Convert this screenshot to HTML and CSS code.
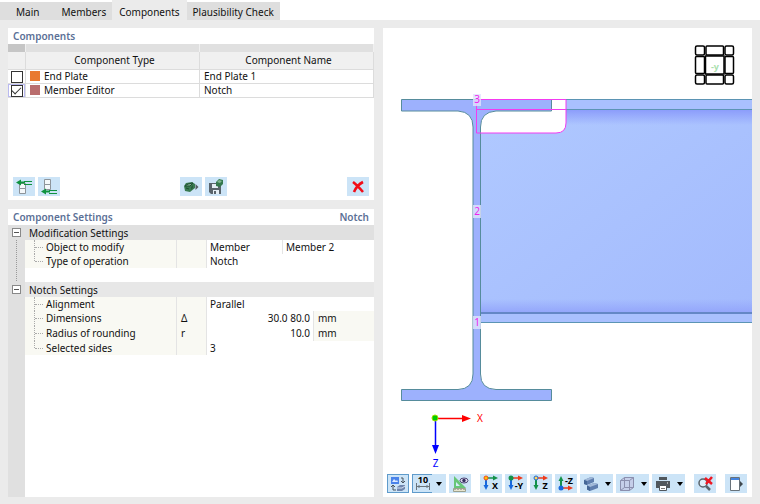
FILE: index.html
```html
<!DOCTYPE html>
<html lang="en">
<head>
<meta charset="utf-8">
<title>Components</title>
<link rel="stylesheet" href="styles.css">
</head>
<body>
<nav class="tabs" aria-label="Sections">
  <button class="tab tab-main" type="button">Main</button>
  <button class="tab" type="button">Members</button>
  <button class="tab tab-active" type="button">Components</button>
  <button class="tab" type="button">Plausibility Check</button>
</nav>

<main class="workspace">
  <div class="side">
    <section class="panel list-panel">
      <h2 class="panel-title">Components</h2>
      <table class="components">
        <colgroup><col class="col-check"><col><col></colgroup>
        <thead>
          <tr class="strip"><td></td><td></td><td></td></tr>
          <tr class="heads"><th></th><th>Component Type</th><th>Component Name</th></tr>
        </thead>
        <tbody>
          <tr>
            <td class="check"><input type="checkbox" aria-label="End Plate 1"></td>
            <td><span class="swatch swatch-orange"></span>End Plate</td>
            <td>End Plate 1</td>
          </tr>
          <tr>
            <td class="check check-focus"><input type="checkbox" checked aria-label="Notch"></td>
            <td><span class="swatch swatch-rose"></span>Member Editor</td>
            <td>Notch</td>
          </tr>
        </tbody>
      </table>
      <div class="actions">
        <button class="tool" type="button" aria-label="Insert above">
          <svg width="18" height="16" viewBox="0 0 18 16"><path d="M4.500 4.500h6v5h-6zM4.500 9.500h6v5h-6z" fill="#f4f8fb" stroke="#8d949a"/><path d="M1 3.500l5-3v2h4v2H6v2z" fill="#10933f"/><path d="M9 2.500h8M9 5.500h8" stroke="#10933f" fill="none"/></svg>
        </button>
        <button class="tool" type="button" aria-label="Insert below">
          <svg width="18" height="16" viewBox="0 0 18 16"><path d="M4.500.5h6v5h-6zM4.500 5.500h6v5h-6z" fill="#f4f8fb" stroke="#8d949a"/><path d="M1 12.500l5-3v2h4v2H6v2z" fill="#10933f"/><path d="M9 11.500h8M9 14.500h8" stroke="#10933f" fill="none"/></svg>
        </button>
        <button class="tool tool-library" type="button" aria-label="Load component">
          <svg width="16" height="16" viewBox="0 0 16 16"><path d="M1 7l2-3 6-1 3 2v4l-5 4-5-1z" fill="#387a50"/><path d="M2 7l3-2 5-1-3 3zM3 9l3 1" fill="#86b597" stroke="#1e4e31"/><path d="M8 8v3l2-2V6" fill="#285f3d"/><path d="M12.500 5l3 3-3 3z" fill="#555d62"/></svg>
        </button>
        <button class="tool" type="button" aria-label="Save component">
          <svg width="16" height="16" viewBox="0 0 16 16"><path d="M1 4h12v11H3l-2-2z" fill="#59636b"/><path d="M4 5h6v4H4zM5 11h6v4H5z" fill="#e4edf4"/><path d="M6 12h2v3H6z" fill="#59636b"/><path d="M8 3l3-3 4 1v4l-3 3-4-1z" fill="#34784d"/><path d="M9 3l2-2 3 1-2 2z" fill="#82b793"/></svg>
        </button>
        <button class="tool tool-delete" type="button" aria-label="Delete component">
          <svg width="16" height="16" viewBox="0 0 16 16"><path d="M3 3q4 3 10 10M13 3Q7 6 4 13" stroke="#f20d18" stroke-width="2.600" fill="none"/></svg>
        </button>
      </div>
    </section>

    <section class="panel settings-panel">
      <header class="settings-head"><h2 class="panel-title">Component Settings</h2><strong class="panel-title">Notch</strong></header>
      <div class="settings-body">
        <table class="settings">
          <colgroup><col class="col-gutter"><col class="col-name"><col class="col-symbol"><col class="col-value"><col class="col-number"><col></colgroup>
          <tbody>
            <tr class="group"><td class="gutter"><button class="toggle" type="button" aria-label="Collapse Modification Settings"></button></td><th colspan="5">Modification Settings</th></tr>
            <tr><td class="gutter linked"></td><td class="name"><span class="branch"></span>Object to modify</td><td class="symbol"></td><td class="value">Member</td><td class="value split" colspan="2">Member 2</td></tr>
            <tr><td class="gutter linked"></td><td class="name"><span class="branch branch-last"></span>Type of operation</td><td class="symbol"></td><td class="value" colspan="3">Notch</td></tr>
            <tr class="spacer"><td class="gutter linked"></td><td colspan="5"></td></tr>
          </tbody>
          <tbody>
            <tr class="group group-light"><td class="gutter"><button class="toggle" type="button" aria-label="Collapse Notch Settings"></button></td><th colspan="5">Notch Settings</th></tr>
            <tr><td class="gutter"></td><td class="name"><span class="branch"></span>Alignment</td><td class="symbol"></td><td class="value" colspan="3">Parallel</td></tr>
            <tr class="measure"><td class="gutter"></td><td class="name"><span class="branch"></span>Dimensions</td><td class="symbol">Δ</td><td class="number" colspan="2">30.0 80.0</td><td class="unit">mm</td></tr>
            <tr class="measure"><td class="gutter"></td><td class="name"><span class="branch"></span>Radius of rounding</td><td class="symbol">r</td><td class="number" colspan="2">10.0</td><td class="unit">mm</td></tr>
            <tr><td class="gutter"></td><td class="name"><span class="branch branch-last"></span>Selected sides</td><td class="symbol"></td><td class="value" colspan="3">3</td></tr>
          </tbody>
        </table>
      </div>
    </section>
  </div>

  <section class="panel view" aria-label="Model view">
    <svg class="scene" viewBox="383 28 369 444" preserveAspectRatio="xMidYMid meet">
      <defs>
        <linearGradient id="web" x1="0" y1="0" x2="1" y2="1"><stop offset="0" stop-color="#b0c9ff"/><stop offset="1" stop-color="#a3bafd"/></linearGradient>
        <linearGradient id="topShade" x1="0" y1="0" x2="0" y2="1"><stop offset="0" stop-color="#8c9dfb"/><stop offset="1" stop-color="#8c9dfb" stop-opacity="0"/></linearGradient>
        <linearGradient id="lowShade" x1="0" y1="0" x2="0" y2="1"><stop offset="0" stop-color="#93a5fb" stop-opacity="0"/><stop offset="1" stop-color="#93a5fb"/></linearGradient>
      </defs>
      <path d="M480 133h76q10 0 10-10v-13h186v204H480z" fill="url(#web)"/>
      <path d="M566 110h186v15H566z" fill="url(#topShade)"/>
      <path d="M480 299h272v14H480z" fill="url(#lowShade)"/>
      <path d="M566 99.500h186v10H566zM480 313.500h272v9H480z" fill="#a9c0fe"/>
      <path d="M566 99.500h186M566 109.500h186M480 322.500h272" stroke="#5b94b4" fill="none"/>
      <path d="M480 313h272" stroke="#6487c6" stroke-width="2"/>
      <path d="M401.500 99.500h150v11.500H496q-15.500 1-15.500 16V374q0 15 15.500 15.500h55.500v11h-150v-11H458q15-.5 15-15.500V127q0-15-15-16h-56.500z" fill="#9db1fd" stroke="#568c9c"/>
      <path d="M476.500 99.500h89.500v23.500q0 10-10 10h-79.500zM476.500 109.500H566" fill="none" stroke="#f33bf0"/>
      <g class="side-label">
        <path d="M473 94h8v12h-8zM473 205h8v13h-8zM473 316h8v13h-8z" fill="#e1e4fd" fill-opacity=".8"/>
        <text x="477" y="103">3</text><text x="477" y="215">2</text><text x="477" y="326">1</text>
      </g>
      <path d="M435.500 418.500H463" stroke="#f00" stroke-width="1.500"/><path d="M462 415l9 3.500-9 3.500z" fill="#f00"/>
      <path d="M435.500 418v28" stroke="#00f" stroke-width="1.500"/><path d="M432 445h7l-3.500 9z" fill="#00f"/>
      <circle cx="435" cy="418" r="3" fill="#0c0" stroke="#9fe000"/>
      <text class="axis axis-x" x="480" y="422">X</text><text class="axis axis-z" x="435.500" y="467">Z</text>
      <g fill="none" stroke="#000" stroke-width="1.500">
        <rect x="695.500" y="46" width="9" height="9" rx="1.500"/><rect x="706" y="46" width="17.500" height="9" rx="1"/><rect x="725" y="46" width="8.500" height="9" rx="1.500"/>
        <rect x="695.500" y="56.500" width="9" height="17" rx="1"/><rect x="705.500" y="56" width="18.500" height="18"/><rect x="725" y="56.500" width="8.500" height="17" rx="1"/>
        <rect x="695.500" y="75" width="9" height="9" rx="1.500"/><rect x="706" y="75" width="17.500" height="9" rx="1"/><rect x="725" y="75" width="8.500" height="9" rx="1.500"/>
      </g>
      <text class="cube-face" x="715" y="70">-y</text>
    </svg>

    <div class="view-tools">
      <button class="tool tool-on" type="button" aria-label="Switch model display">
        <svg width="18" height="16" viewBox="0 0 18 16"><path d="M2 1h8v7H2z" fill="#4a83ea"/><path d="M3 6l2-3 2 2 1-1 1 2z" fill="#dce9ff"/><path d="M8 11l3-2h5v4l-3 2H8z" fill="#6f86ae"/><path d="M8 12h5l3-2" stroke="#d9e3f2" fill="none"/><path d="M12 2h2v4M12 5l2 2 2-2M4 10v4h3M2 11l2-2 2 2" stroke="#49535c" fill="none"/></svg>
      </button>
      <div class="pair">
        <button class="tool tool-on tool-half" type="button" aria-label="Dimensions">
          <svg width="18" height="17" viewBox="0 0 18 17"><text class="icon-text" x="9" y="8">10</text><path d="M2.500 8v7M15.500 8v7M3 11.500h12M5 10v3M13 10v3" stroke="#69747c" fill="none"/></svg>
        </button>
        <button class="drop" type="button" aria-label="Dimension options"></button>
      </div>
      <button class="tool" type="button" aria-label="Measure visibility">
        <svg width="18" height="16" viewBox="0 0 18 16"><path d="M3 0v12h12z" fill="#67c678"/><path d="M5 6v4h4z" fill="#d4ecfa"/><path d="M2.500 12.500h12v3h-12z" fill="#e8e5cf" stroke="#9ba18e"/><path d="M4 13v1M7 13v1M10 13v1M13 13v1" stroke="#777"/><ellipse cx="13" cy="4.500" rx="4" ry="2.500" fill="#dcd9ee" stroke="#514a78"/><circle cx="13" cy="4.500" r="1.700" fill="#332d5d"/></svg>
      </button>
      <button class="tool group-start" type="button" aria-label="View in X">
        <svg width="20" height="19" viewBox="0 0 20 19"><path d="M5 4h8" stroke="#14924a" stroke-width="1.500"/><path d="M12 1.500L17 4l-5 2.500z" fill="#14924a"/><path d="M5 4v8" stroke="#1768dd" stroke-width="2"/><path d="M2.500 11h5L5 16z" fill="#1768dd"/><circle cx="5" cy="4" r="2" fill="#ffc400" stroke="#f04a22"/><text class="icon-text" x="14" y="15">X</text></svg>
      </button>
      <button class="tool" type="button" aria-label="View in minus Y">
        <svg width="20" height="19" viewBox="0 0 20 19"><path d="M5 4h8" stroke="#ee3b1c" stroke-width="1.500"/><path d="M12 1.500L17 4l-5 2.500z" fill="#ee3b1c"/><path d="M5 4v8" stroke="#1768dd" stroke-width="2"/><path d="M2.500 11h5L5 16z" fill="#1768dd"/><circle cx="5" cy="4" r="2.500" fill="#14924a"/><text class="icon-text" x="13" y="15">-Y</text></svg>
      </button>
      <button class="tool" type="button" aria-label="View in Z">
        <svg width="20" height="19" viewBox="0 0 20 19"><path d="M5 4h8" stroke="#ee3b1c" stroke-width="1.500"/><path d="M12 1.500L17 4l-5 2.500z" fill="#ee3b1c"/><path d="M5 4v8" stroke="#14924a" stroke-width="2"/><path d="M2.500 11h5L5 16z" fill="#14924a"/><circle cx="5" cy="4" r="2" fill="#ffd85a" stroke="#1768dd"/><text class="icon-text" x="14" y="15">Z</text></svg>
      </button>
      <button class="tool" type="button" aria-label="View in minus Z">
        <svg width="20" height="19" viewBox="0 0 20 19"><path d="M5 14h8" stroke="#ee3b1c" stroke-width="1.500"/><path d="M12 11.500l5 2.500-5 2.500z" fill="#ee3b1c"/><path d="M5 14V6" stroke="#14924a" stroke-width="2"/><path d="M2.500 7h5L5 2z" fill="#14924a"/><circle cx="5" cy="14" r="2.500" fill="#1768dd"/><text class="icon-text" x="13" y="10">-Z</text></svg>
      </button>
      <div class="pair">
        <button class="tool" type="button" aria-label="Solid display">
          <svg width="18" height="16" viewBox="0 0 18 16"><path d="M2 4l7-3 3 1v4l-7 3-3-1z" fill="#5f7eae"/><path d="M2 4l7-3 3 1-7 3z" fill="#a2bad9"/><path d="M5 9.500L12 7l4 1v4l-8 3-3-1.500z" fill="#5f7eae"/><path d="M5 9.500L12 7l4 1-8 3z" fill="#a2bad9"/><path d="M2 4l3 1v4l-3-1zM5 9.500L8 11v4l-3-1.500z" fill="#456796"/></svg>
        </button>
        <button class="drop" type="button" aria-label="Solid display options"></button>
      </div>
      <div class="pair">
        <button class="tool" type="button" aria-label="Transparent display">
          <svg width="18" height="16" viewBox="0 0 18 16"><path d="M2.500 4.500l4-3h9v10l-4 3h-9z" fill="#c5cee9" stroke="#8b8fae"/><path d="M2.500 4.500h9v10M11.500 4.500l4-3M6.500 1.500v10h9M6.500 11.500l-4 3" fill="none" stroke="#8b8fae"/></svg>
        </button>
        <button class="drop" type="button" aria-label="Transparent display options"></button>
      </div>
      <div class="pair">
        <button class="tool" type="button" aria-label="Print">
          <svg width="18" height="16" viewBox="0 0 18 16"><path d="M5 1h8v3H5zM2 5h14v7H2z" fill="#50575d"/><path d="M5.500 9.500h7v5h-7z" fill="#fff" stroke="#50575d"/><path d="M7 12.500h4" stroke="#777"/><path d="M13 7h1" stroke="#fff"/></svg>
        </button>
        <button class="drop" type="button" aria-label="Print options"></button>
      </div>
      <button class="tool group-start" type="button" aria-label="Clear search">
        <svg width="18" height="16" viewBox="0 0 18 16"><circle cx="7" cy="7" r="4" fill="#e0effa" stroke="#59636b" stroke-width="1.500"/><path d="M10 10l4 4" stroke="#59636b" stroke-width="2.500"/><path d="M9 2l7 6M16 1l-6 7" stroke="#ee1722" stroke-width="2.500"/></svg>
      </button>
      <button class="tool group-start" type="button" aria-label="Open side panel">
        <svg width="18" height="16" viewBox="0 0 18 16"><path d="M3.500 1.500h9v13h-9z" fill="#fff" stroke="#68727a"/><path d="M4 2h8v2H4z" fill="#4383df"/><path d="M13 5l3 3-3 3z" fill="#3f484f"/></svg>
      </button>
    </div>
  </section>
</main>
</body>
</html>
```
FILE: styles.css
```css
* { box-sizing: border-box; }

body {
  margin: 0;
  min-height: 100vh;
  display: flex;
  flex-direction: column;
  background: #ebebeb;
  color: #111;
  font: 10px/14px "Noto Sans", "Open Sans", sans-serif;
}

button {
  border: 0;
  margin: 0;
  padding: 0;
  font: inherit;
  color: inherit;
  background: none;
}

svg { display: block; }

.tabs {
  display: flex;
  align-items: flex-end;
  height: 20px;
  background: #fff;
}

.tab {
  height: 18px;
  padding: 2px 6px 0;
  background: #dedede;
}

.tab-main { padding: 2px 16px 0; }

.tab-active {
  height: 20px;
  padding: 4px 7px 0;
  background: #ebebeb;
}

.workspace {
  flex: 1;
  display: grid;
  grid-template-columns: 366fr 369fr;
  gap: 9px;
  padding: 8px 8px 7px;
}

.side {
  display: flex;
  flex-direction: column;
  gap: 9px;
  min-width: 0;
}

.panel { background: #fff; }

.panel-title {
  margin: 0;
  padding: 0 5px;
  font-size: 10px;
  font-weight: 600;
  line-height: 16px;
  color: #5b7096;
}

.list-panel {
  display: flex;
  flex-direction: column;
  min-height: 172px;
}

table {
  width: 100%;
  table-layout: fixed;
  border-collapse: separate;
  border-spacing: 0;
}

td, th {
  padding: 0;
  font-weight: 400;
  text-align: left;
  white-space: nowrap;
}

.col-check { width: 18px; }

.components td, .components th {
  height: 14px;
  padding-left: 4px;
  line-height: 13px;
  border-right: 1px solid #dcdcdc;
  border-bottom: 1px solid #dcdcdc;
}

.components .strip td {
  height: 8px;
  background: #e0e0e0;
  border-color: #f0f0f0;
  border-bottom: 0;
}

.components .strip td:first-child { background: #c6c6c6; }

.components .heads th {
  height: 18px;
  background: #f0f0f0;
  text-align: center;
}

.components .check {
  padding: 0;
  line-height: 0;
  text-align: center;
}

.components .check-focus { box-shadow: inset 0 0 0 1px #b9b9f0; }

.check input {
  appearance: none;
  display: inline-grid;
  place-items: center;
  width: 12px;
  height: 12px;
  margin: 0;
  border: 1px solid #333;
  background: #fff;
  vertical-align: top;
}

.check input:checked::before {
  content: "";
  width: 8px;
  height: 4px;
  margin-bottom: 3px;
  border: solid #333;
  border-width: 0 0 1px 1px;
  transform: rotate(-45deg);
}

.swatch {
  display: inline-block;
  width: 10px;
  height: 10px;
  margin-right: 4px;
  vertical-align: -1px;
}

.swatch-orange { background: #e97930; }
.swatch-rose { background: #b96d6d; }

.actions {
  display: flex;
  gap: 3px;
  margin-top: auto;
  padding: 0 5px 4px;
}

.tool {
  display: grid;
  place-items: center;
  flex: none;
  width: 22px;
  height: 19px;
  background: #cce4f7;
}

.tool-library { margin-left: 117px; }
.tool-delete { margin-left: auto; }

.settings-panel {
  flex: 1;
  display: flex;
  flex-direction: column;
}

.settings-head {
  display: flex;
  justify-content: space-between;
}

.settings-body {
  flex: 1;
  background: linear-gradient(90deg, #e0e0e0 17px, #fff 17px);
}

.col-gutter { width: 17px; }
.col-name { width: 151px; }
.col-symbol { width: 31px; }
.col-value { width: 75px; }
.col-number { width: 31px; }

.settings td, .settings th { height: 14px; }

.settings .group td, .settings .group th {
  height: 15px;
  background: #e0e0e0;
}

.settings .measure td {
  height: 15px;
  line-height: 15px;
}

.settings .group th { padding-left: 4px; }
.settings .group-light th { background: #e7e7e7; }

.settings .gutter { padding-left: 4px; }

.linked { background: repeating-linear-gradient(#999 0 1px, transparent 1px 2px) 8px 0 / 1px 100% no-repeat; }

.toggle {
  display: block;
  width: 9px;
  height: 9px;
  border: 1px solid #888;
  background: linear-gradient(#555, #555) center / 5px 1px no-repeat #fff;
}

.settings .name {
  display: flex;
  padding-left: 9px;
  background: #f9f9f3;
}

.branch {
  width: 9px;
  margin-right: 3px;
  border-left: 1px dotted #aaa;
}

.branch::after {
  content: "";
  display: block;
  height: 7px;
  border-bottom: 1px dotted #aaa;
}

.branch-last { height: 7px; }

.settings .symbol {
  padding-left: 4px;
  background: #f9f9f3;
  border-left: 1px solid #e4e4e4;
  border-right: 1px solid #e4e4e4;
}

.settings .value { padding-left: 3px; }

.settings .split { border-left: 1px solid #e4e4e4; }

.settings .number {
  padding-right: 3px;
  text-align: right;
}

.settings .unit {
  padding-left: 4px;
  background: #f9f9f3;
  border-left: 1px solid #e4e4e4;
}

.view {
  display: flex;
  flex-direction: column;
  min-width: 0;
}

.scene {
  flex: 1;
  width: 100%;
  min-height: 0;
}

.side-label, .axis {
  font-size: 10px;
  text-anchor: middle;
}

.side-label text { fill: #ee22ee; }
.axis-x { fill: #f00; }
.axis-z { fill: #00f; }

.cube-face {
  font-size: 9px;
  font-weight: 700;
  text-anchor: middle;
  fill: #a9dfae;
}

.icon-text {
  font-size: 9px;
  font-weight: 700;
  text-anchor: middle;
}

.view-tools {
  display: flex;
  gap: 3px;
  padding: 2px 4px 4px;
}

.view-tools svg { overflow: visible; }

.pair {
  display: flex;
  background: #cce4f7;
}

.tool-on { border: 1px solid #5f9bcb; }

.tool-half {
  width: 20px;
  border-right: 0;
}

.drop {
  display: grid;
  place-items: center;
  width: 11px;
}

.tool-half + .drop { width: 14px; }

.drop::before {
  content: "";
  border: 3px solid transparent;
  border-top: 4px solid #000;
  border-bottom: 0;
}

.group-start { margin-left: 6px; }
```
